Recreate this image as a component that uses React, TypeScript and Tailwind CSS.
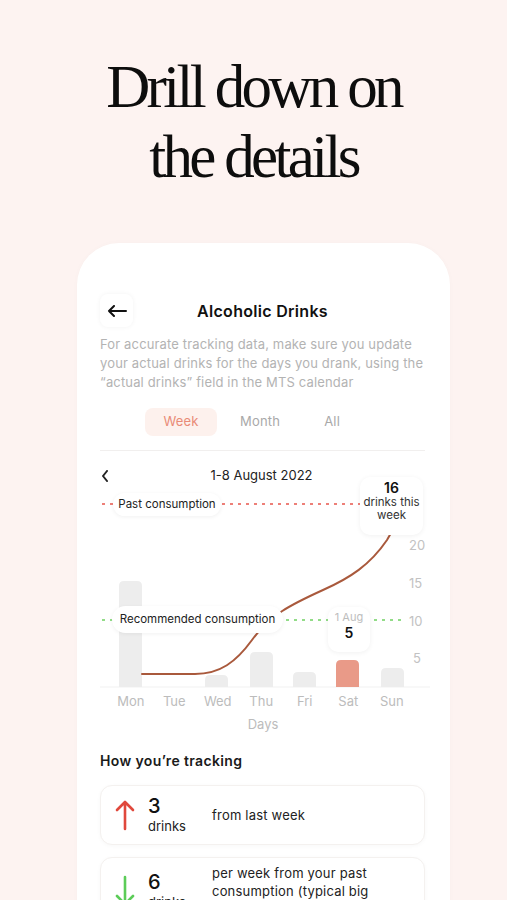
import React from "react";

const sans = { fontFamily: "Inter, 'Noto Sans', sans-serif" };

function Chart() {
  const bars = [
    { x: 19, top: 91, color: "#ededed" },
    { x: 105, top: 185, color: "#ededed" },
    { x: 150, top: 162, color: "#ededed" },
    { x: 193, top: 182, color: "#ededed" },
    { x: 236, top: 170, color: "#e99a88" },
    { x: 281, top: 178, color: "#ededed" },
  ];
  return (
    <div className="relative h-[200px] w-[325px]">
      <svg className="absolute left-0 top-0" width="335" height="200" viewBox="0 0 335 200">
        <line x1="0" y1="197" x2="330" y2="197" stroke="#f1f1f1" strokeWidth="1" />
        {bars.map((b, i) => (
          <path
            key={i}
            d={`M${b.x} ${197} L${b.x} ${b.top + 5} Q${b.x} ${b.top} ${b.x + 5} ${b.top} L${b.x + 18} ${b.top} Q${b.x + 23} ${b.top} ${b.x + 23} ${b.top + 5} L${b.x + 23} 197 Z`}
            fill={b.color}
          />
        ))}
        <line x1="2" y1="14" x2="262" y2="14" stroke="#e8554c" strokeWidth="1.3" strokeDasharray="3 5" />
        <line x1="2" y1="130" x2="305" y2="130" stroke="#6fd162" strokeWidth="1.3" strokeDasharray="3 5" />
        <path
          d="M42 184 L95 184 C120 184 136 172 152 150 C170 125 190 115 223 100 C250 88 270 75 287 50 L291 43"
          fill="none"
          stroke="#a9593c"
          strokeWidth="2"
          strokeLinecap="round"
        />
        <circle cx="291" cy="39" r="4" fill="#fff" stroke="#b5674b" strokeWidth="2" />
      </svg>
      <div className="absolute left-[13px] top-[3px] flex h-[23px] w-[108px] items-center justify-center rounded-full bg-white text-[11.5px] text-[#222] shadow-[0_1px_4px_rgba(0,0,0,0.06)]">
        Past consumption
      </div>
      <div className="absolute left-[12px] top-[116px] flex h-[27px] w-[171px] items-center justify-center rounded-full bg-white text-[11.5px] text-[#222] shadow-[0_1px_4px_rgba(0,0,0,0.06)]">
        Recommended consumption
      </div>
      <div className="absolute left-[260px] top-[-13px] flex h-[58px] w-[63px] flex-col items-center rounded-[10px] bg-white pt-[2px] leading-[13px] shadow-[0_1px_5px_rgba(0,0,0,0.06)]">
        <span className="text-[14px] font-semibold leading-[17px] text-[#111]">16</span>
        <span className="text-center text-[11.5px] text-[#333]">drinks this week</span>
      </div>
      <div className="absolute left-[228px] top-[117px] flex h-[45px] w-[42px] flex-col items-center rounded-[10px] bg-white pt-[3px] shadow-[0_1px_5px_rgba(0,0,0,0.06)]">
        <span className="text-[11px] leading-[14px] text-[#bdbdbd]">1 Aug</span>
        <span className="text-[14px] font-semibold leading-[18px] text-[#111]">5</span>
      </div>
      <span className="absolute left-[309px] top-[46px] text-[13px] text-[#c2c2c2]">20</span>
      <span className="absolute left-[309px] top-[84px] text-[13px] text-[#c2c2c2]">15</span>
      <span className="absolute left-[309px] top-[122px] text-[13px] text-[#c2c2c2]">10</span>
      <span className="absolute left-[313px] top-[159px] text-[13px] text-[#c2c2c2]">5</span>
    </div>
  );
}

function TrackCard({ up, num, text }: { up: boolean; num: string; text: React.ReactNode }) {
  return (
    <div className="flex min-h-[60px] items-center rounded-[12px] border border-[#f4f1ef] bg-white pl-[14px] shadow-[0_1px_4px_rgba(0,0,0,0.03)]">
      <svg width="20" height="32" viewBox="0 0 20 32" className="shrink-0">
        {up ? (
          <path d="M10 30 V3 M2 11 L10 3 L18 11" fill="none" stroke="#e0483c" strokeWidth="2.6" strokeLinecap="round" strokeLinejoin="round" />
        ) : (
          <path d="M10 2 V29 M2 21 L10 29 L18 21" fill="none" stroke="#5ccc58" strokeWidth="2.6" strokeLinecap="round" strokeLinejoin="round" />
        )}
      </svg>
      <div className="ml-[13px] flex w-[64px] shrink-0 flex-col">
        <span className="text-[20px] font-medium leading-[22px] text-[#111]">{num}</span>
        <span className="text-[13px] leading-[18px] text-[#222]">drinks</span>
      </div>
      <div className="max-w-[172px] py-[6px] text-[13px] leading-[18px] tracking-[0.2px] text-[#222]">{text}</div>
    </div>
  );
}

export default function App() {
  return (
    <div className="h-[900px] w-full overflow-hidden bg-[#fdf3f1]" style={sans}>
      <h1
        className="pt-[52px] text-center text-[61px] leading-[70px] tracking-[-0.06em] text-[#0d0d0d]"
        style={{ fontFamily: "'Liberation Serif', 'DejaVu Serif', serif" }}
      >
        Drill down on
        <br />
        the details
      </h1>
      <div className="ml-[77px] mt-[51px] w-[373px] rounded-t-[42px] bg-white pl-[23px] pr-[25px] pt-[51px] pb-[40px] shadow-[0_0_6px_rgba(0,0,0,0.02)]">
        <div className="flex items-center">
          <div className="flex h-[33px] w-[33px] items-center justify-center rounded-[8px] bg-white shadow-[0_0_5px_rgba(0,0,0,0.05)]">
            <svg width="20" height="12" viewBox="0 0 20 12">
              <path d="M19 6 H2 M7 1 L2 6 L7 11" fill="none" stroke="#111" strokeWidth="2" strokeLinecap="round" strokeLinejoin="round" />
            </svg>
          </div>
          <div className="flex-1 pr-[33px] text-center text-[16px] font-semibold tracking-[0.3px] text-[#111]">Alcoholic Drinks</div>
        </div>
        <p className="mt-[8px] text-[13px] leading-[19px] tracking-[0.15px] text-[#b3b3b3]">
          For accurate tracking data, make sure you update your actual drinks for the days you drank, using the “actual drinks” field in the MTS calendar
        </p>
        <div className="mt-[16px] flex items-center pl-[45px] text-[13px] tracking-[0.2px]">
          <div className="flex h-[28px] w-[72px] items-center justify-center rounded-[8px] bg-[#fdf1ed] text-[#e98b77]">Week</div>
          <div className="ml-[23px] text-[#a9a9a9]">Month</div>
          <div className="ml-[44px] text-[#a9a9a9]">All</div>
        </div>
        <div className="mt-[14px] h-px w-full bg-[#f1efee]" />
        <div className="relative mt-[14px] flex h-[22px] items-center justify-center text-[13px] text-[#222]">
          <svg width="8" height="12" viewBox="0 0 8 12" className="absolute left-[1px] top-[5px]">
            <path d="M6 1 L2 6 L6 11" fill="none" stroke="#222" strokeWidth="2" strokeLinecap="round" strokeLinejoin="round" />
          </svg>
          <span className="pr-[2px]">1-8 August 2022</span>
        </div>
        <div className="mt-[3px]">
          <Chart />
        </div>
        <div className="mt-[2px] flex text-[13px] text-[#bcbcbc]">
          {["Mon", "Tue", "Wed", "Thu", "Fri", "Sat", "Sun"].map((d, i) => (
            <div key={d} className="flex w-[43.5px] justify-center" style={{ marginLeft: i === 0 ? 9 : 0 }}>
              {d}
            </div>
          ))}
        </div>
        <div className="mt-[3px] pl-[1px] text-center text-[13px] text-[#bcbcbc]">Days</div>
        <div className="mt-[16px] text-[14px] font-semibold tracking-[0.35px] text-[#1a1a1a]">How you’re tracking</div>
        <div className="mt-[14px] flex flex-col gap-[12px]">
          <TrackCard up num="3" text="from last week" />
          <TrackCard up={false} num="6" text="per week from your past consumption (typical big drinking week)" />
        </div>
      </div>
    </div>
  );
}
